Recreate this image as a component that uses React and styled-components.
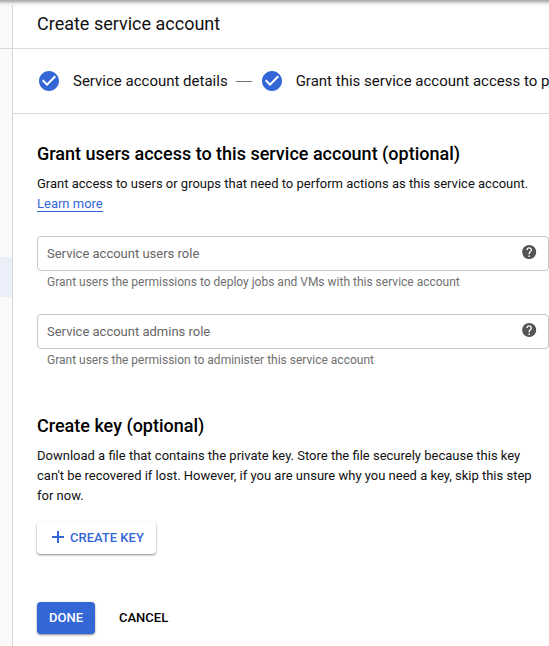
import React from "react";
import styled, { createGlobalStyle } from "styled-components";
import { MdCheckCircle, MdHelp } from "react-icons/md";

const GlobalStyle = createGlobalStyle`
  * { box-sizing: border-box; }
  body { margin: 0; background: #fff; overflow: hidden; }
`;

const Page = styled.div`
  display: flex;
  position: relative;
  width: 100%;
  height: 646px;
  overflow: hidden;
  font-family: Roboto, sans-serif;
  font-size: 13px;
  color: #111;
`;

const TopShadow = styled.div`
  position: absolute;
  inset: 0 0 auto 0;
  height: 7px;
  background: linear-gradient(#adadad 0, #b4b4b4 1px, #c4c4c4 2px, #dedede 3px, #f0f0f0 4px, rgba(255, 255, 255, 0) 7px);
`;

const Sidebar = styled.nav`
  flex: 0 0 12px;
  background: #fafafa;
`;

const SidebarHead = styled.div`
  height: 49px;
  border-bottom: 1px solid #dadada;
`;

const SidebarActive = styled.div`
  height: 40px;
  margin-top: 208px;
  background: #ebeff9;
`;

const Main = styled.main`
  flex: 1;
  min-width: 0;
  border-left: 1px solid #d6d6d6;
  background: #fff;
`;

const Header = styled.header`
  display: flex;
  align-items: center;
  height: 49px;
  padding-left: 24px;
  border-bottom: 1px solid #dadada;
`;

const Title = styled.h1`
  margin: 0;
  font-size: 18px;
  font-weight: 400;
  line-height: 24px;
  color: #111;
`;

const Stepper = styled.div`
  display: flex;
  align-items: center;
  height: 65px;
  padding-left: 24px;
  border-bottom: 1px solid #dadada;
  white-space: nowrap;
`;

const StepIcon = styled(MdCheckCircle)`
  flex: none;
  width: 24px;
  height: 24px;
  color: #3367d6;
`;

const StepLabel = styled.span`
  flex: none;
  margin-left: 12px;
  font-size: 15px;
  line-height: 20px;
`;

const StepLine = styled.span`
  flex: none;
  width: 16px;
  height: 1px;
  margin: 0 8px;
  background: #757575;
`;

const Content = styled.div`
  padding: 28px 0 0 24px;
`;

const SectionTitle = styled.h2`
  margin: 0 0 8px;
  font-size: 18px;
  font-weight: 500;
  line-height: 24px;
  color: #000;
`;

const Text = styled.p`
  margin: 0;
  line-height: 20px;
  white-space: nowrap;
`;

const Link = styled.a`
  display: inline-block;
  height: 18px;
  line-height: 20px;
  color: #3367d6;
  border-bottom: 1px solid #3367d6;
`;

const Field = styled.div`
  height: 78px;
`;

const Fields = styled.div`
  margin-top: 22px;
  height: 178px;
`;

const Select = styled.div`
  display: flex;
  align-items: center;
  justify-content: space-between;
  height: 35px;
  padding: 0 11px 0 9px;
  border: 1px solid #c6c6c6;
  border-radius: 4px;
  color: #666;
`;

const HelpIcon = styled(MdHelp)`
  width: 16.8px;
  height: 16.8px;
  margin: 0 -0.4px 3.2px 0;
  transform: translate(-0.2px, -0.3px);
  color: #555;
`;

const Hint = styled.div`
  padding: 3px 0 0 10px;
  font-size: 12px;
  line-height: 16px;
  color: #707070;
`;

const Button = styled.button`
  display: flex;
  align-items: center;
  height: 32px;
  padding: 0 12px;
  border: 0;
  border-radius: 4px;
  background: ${(p) => (p.$primary ? "#3367d6" : "#fff")};
  color: ${(p) => (p.$primary ? "#fff" : p.$flat ? "#000" : "#3367d6")};
  box-shadow: ${(p) =>
    p.$flat ? "none" : "0 1px 2px rgba(0, 0, 0, 0.38), 0 1px 3px rgba(0, 0, 0, 0.12)"};
  font: 500 13px/20px Roboto, sans-serif;
  white-space: nowrap;
`;

const PlusIcon = styled.svg`
  width: 12px;
  height: 12px;
  margin: 0 6px 2px 3px;
`;

const KeyAction = styled.div`
  display: flex;
  margin-top: 16px;
`;

const Actions = styled.div`
  display: flex;
  gap: 12px;
  margin-top: 48px;
`;

export default function App() {
  return (
    <>
      <GlobalStyle />
      <Page>
        <Sidebar>
          <SidebarHead />
          <SidebarActive />
        </Sidebar>
        <Main>
          <Header>
            <Title>Create service account</Title>
          </Header>
          <Stepper>
            <StepIcon />
            <StepLabel>Service account details</StepLabel>
            <StepLine />
            <StepIcon />
            <StepLabel>Grant this service account access to p</StepLabel>
          </Stepper>
          <Content>
            <SectionTitle>Grant users access to this service account (optional)</SectionTitle>
            <Text>
              Grant access to users or groups that need to perform actions as this service account.
              <br />
              <Link>Learn more</Link>
            </Text>
            <Fields>
              <Field>
                <Select>
                  Service account users role
                  <HelpIcon />
                </Select>
                <Hint>Grant users the permissions to deploy jobs and VMs with this service account</Hint>
              </Field>
              <Field>
                <Select>
                  Service account admins role
                  <HelpIcon />
                </Select>
                <Hint>Grant users the permission to administer this service account</Hint>
              </Field>
            </Fields>
            <SectionTitle>Create key (optional)</SectionTitle>
            <Text>
              Download a file that contains the private key. Store the file securely because this key
              <br />
              can't be recovered if lost. However, if you are unsure why you need a key, skip this step
              <br />
              for now.
            </Text>
            <KeyAction>
              <Button>
                <PlusIcon viewBox="0 0 12 12">
                  <path d="M6 0v12M0 6h12" stroke="currentColor" strokeWidth="2" />
                </PlusIcon>
                CREATE KEY
              </Button>
            </KeyAction>
            <Actions>
              <Button $primary>DONE</Button>
              <Button $flat>CANCEL</Button>
            </Actions>
          </Content>
        </Main>
        <TopShadow />
      </Page>
    </>
  );
}
